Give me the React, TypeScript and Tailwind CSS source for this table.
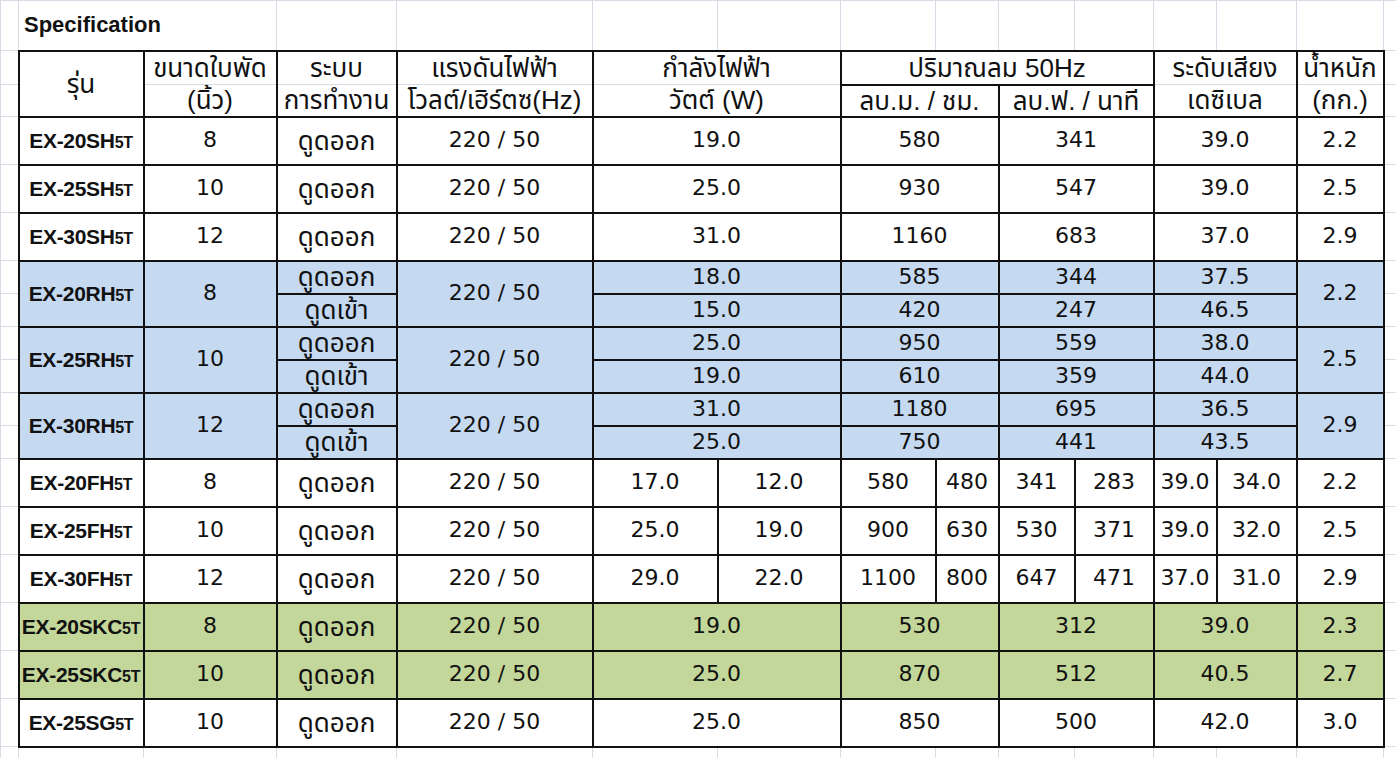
import type { ReactNode } from 'react';

const THAI = "font-['Liberation_Sans','Noto_Sans_Thai','Tahoma',sans-serif]";
const NUM = "font-['DejaVu_Sans','Tahoma',sans-serif]";

// excel-like sheet columns A..O
const colWidths = [
  'w-[18px]', 'w-[125px]', 'w-[133px]', 'w-[120px]', 'w-[196px]', 'w-[125px]', 'w-[123px]',
  'w-[95px]', 'w-[63px]', 'w-[76px]', 'w-[79px]', 'w-[63px]', 'w-[80px]', 'w-[87px]', 'w-[13px]',
];

type CellProps = {
  children?: ReactNode;
  className?: string;
  colSpan?: number;
  rowSpan?: number;
};

// faint gridline cell (no fill)
function G({ colSpan, className = '' }: CellProps) {
  return <td colSpan={colSpan} className={`border border-[#d9dce6] p-0 ${className}`} />;
}

// cell with black borders
function B({ children, className = '', colSpan, rowSpan }: CellProps) {
  return (
    <td
      colSpan={colSpan}
      rowSpan={rowSpan}
      className={`border-2 border-[#111] p-0 text-center align-middle whitespace-nowrap ${className}`}
    >
      {children}
    </td>
  );
}

function Model({ name }: { name: string }) {
  const base = name.slice(0, -2);
  return (
    <span className="font-['Liberation_Sans',Arial,sans-serif] font-bold text-[21px] tracking-[-0.3px]">
      {base}
      <span className="text-[16px]">5T</span>
    </span>
  );
}

function Num({ children }: { children: ReactNode }) {
  return <span className={`${NUM} text-[22px]`}>{children}</span>;
}

function Thai({ children }: { children: ReactNode }) {
  return <span className={`${THAI} text-[26px] leading-[28px]`}>{children}</span>;
}

type Simple = {
  model: string; size: string; volt: string; watt: string;
  m3: string; cfm: string; db: string; kg: string; bg: string;
};

function SimpleRow({ r }: { r: Simple }) {
  return (
    <tr className="h-[48px]">
      <G />
      <B className={r.bg}><Model name={r.model} /></B>
      <B className={r.bg}><Num>{r.size}</Num></B>
      <B className={r.bg}><Thai>ดูดออก</Thai></B>
      <B className={r.bg}><Num>{r.volt}</Num></B>
      <B colSpan={2} className={r.bg}><Num>{r.watt}</Num></B>
      <B colSpan={2} className={r.bg}><Num>{r.m3}</Num></B>
      <B colSpan={2} className={r.bg}><Num>{r.cfm}</Num></B>
      <B colSpan={2} className={r.bg}><Num>{r.db}</Num></B>
      <B className={r.bg}><Num>{r.kg}</Num></B>
      <G />
    </tr>
  );
}

type Rev = {
  model: string; size: string; kg: string;
  watt: [string, string]; m3: [string, string]; cfm: [string, string]; db: [string, string];
};

function RevRows({ r }: { r: Rev }) {
  const bg = 'bg-[#c5d9f1]';
  return (
    <>
      <tr className="h-[33px]">
        <G />
        <B rowSpan={2} className={bg}><Model name={r.model} /></B>
        <B rowSpan={2} className={bg}><Num>{r.size}</Num></B>
        <B className={`${bg} align-bottom`}><Thai>ดูดออก</Thai></B>
        <B rowSpan={2} className={bg}><Num>220 / 50</Num></B>
        <B colSpan={2} className={`${bg} align-bottom`}><Num>{r.watt[0]}</Num></B>
        <B colSpan={2} className={`${bg} align-bottom`}><Num>{r.m3[0]}</Num></B>
        <B colSpan={2} className={`${bg} align-bottom`}><Num>{r.cfm[0]}</Num></B>
        <B colSpan={2} className={`${bg} align-bottom`}><Num>{r.db[0]}</Num></B>
        <B rowSpan={2} className={bg}><Num>{r.kg}</Num></B>
        <G />
      </tr>
      <tr className="h-[33px]">
        <G />
        <B className={`${bg} align-bottom`}><Thai>ดูดเข้า</Thai></B>
        <B colSpan={2} className={`${bg} align-bottom`}><Num>{r.watt[1]}</Num></B>
        <B colSpan={2} className={`${bg} align-bottom`}><Num>{r.m3[1]}</Num></B>
        <B colSpan={2} className={`${bg} align-bottom`}><Num>{r.cfm[1]}</Num></B>
        <B colSpan={2} className={`${bg} align-bottom`}><Num>{r.db[1]}</Num></B>
        <G />
      </tr>
    </>
  );
}

type Fh = { model: string; size: string; vals: string[]; kg: string };

function FhRow({ r }: { r: Fh }) {
  return (
    <tr className="h-[48px]">
      <G />
      <B><Model name={r.model} /></B>
      <B><Num>{r.size}</Num></B>
      <B><Thai>ดูดออก</Thai></B>
      <B><Num>220 / 50</Num></B>
      {r.vals.map((v, i) => (
        <B key={i}><Num>{v}</Num></B>
      ))}
      <B><Num>{r.kg}</Num></B>
      <G />
    </tr>
  );
}

const shRows: Simple[] = [
  { model: 'EX-20SH5T', size: '8', volt: '220 / 50', watt: '19.0', m3: '580', cfm: '341', db: '39.0', kg: '2.2', bg: '' },
  { model: 'EX-25SH5T', size: '10', volt: '220 / 50', watt: '25.0', m3: '930', cfm: '547', db: '39.0', kg: '2.5', bg: '' },
  { model: 'EX-30SH5T', size: '12', volt: '220 / 50', watt: '31.0', m3: '1160', cfm: '683', db: '37.0', kg: '2.9', bg: '' },
];

const rhRows: Rev[] = [
  { model: 'EX-20RH5T', size: '8', kg: '2.2', watt: ['18.0', '15.0'], m3: ['585', '420'], cfm: ['344', '247'], db: ['37.5', '46.5'] },
  { model: 'EX-25RH5T', size: '10', kg: '2.5', watt: ['25.0', '19.0'], m3: ['950', '610'], cfm: ['559', '359'], db: ['38.0', '44.0'] },
  { model: 'EX-30RH5T', size: '12', kg: '2.9', watt: ['31.0', '25.0'], m3: ['1180', '750'], cfm: ['695', '441'], db: ['36.5', '43.5'] },
];

const fhRows: Fh[] = [
  { model: 'EX-20FH5T', size: '8', vals: ['17.0', '12.0', '580', '480', '341', '283', '39.0', '34.0'], kg: '2.2' },
  { model: 'EX-25FH5T', size: '10', vals: ['25.0', '19.0', '900', '630', '530', '371', '39.0', '32.0'], kg: '2.5' },
  { model: 'EX-30FH5T', size: '12', vals: ['29.0', '22.0', '1100', '800', '647', '471', '37.0', '31.0'], kg: '2.9' },
];

const tailRows: Simple[] = [
  { model: 'EX-20SKC5T', size: '8', volt: '220 / 50', watt: '19.0', m3: '530', cfm: '312', db: '39.0', kg: '2.3', bg: 'bg-[#c4d79b]' },
  { model: 'EX-25SKC5T', size: '10', volt: '220 / 50', watt: '25.0', m3: '870', cfm: '512', db: '40.5', kg: '2.7', bg: 'bg-[#c4d79b]' },
  { model: 'EX-25SG5T', size: '10', volt: '220 / 50', watt: '25.0', m3: '850', cfm: '500', db: '42.0', kg: '3.0', bg: '' },
];

const headTop = 'border-b border-b-[#d9dce6]';
const headBottom = 'border-t border-t-[#d9dce6]';

export default function App() {
  return (
    <div className="w-[1396px] h-[758px] overflow-hidden bg-white text-[#111] leading-[1.1]">
      <table className="table-fixed border-collapse w-[1396px]">
        <colgroup>
          {colWidths.map((w, i) => (
            <col key={i} className={w} />
          ))}
        </colgroup>
        <tbody>
          <tr className="h-[50px]">
            <G />
            <td colSpan={2} className="border border-[#d9dce6] p-0 pl-[5px] align-middle whitespace-nowrap">
              <span className="font-['Liberation_Sans',Arial,sans-serif] font-bold text-[22px]">Specification</span>
            </td>
            {Array.from({ length: 11 }).map((_, i) => (
              <G key={i} />
            ))}
            <G />
          </tr>

          <tr className="h-[34px]">
            <G />
            <B rowSpan={2}><Thai>รุ่น</Thai></B>
            <B className={`${headTop} align-bottom`}><Thai>ขนาดใบพัด</Thai></B>
            <B className={`${headTop} align-bottom`}><Thai>ระบบ</Thai></B>
            <B className={`${headTop} align-bottom`}><Thai>แรงดันไฟฟ้า</Thai></B>
            <B colSpan={2} className={`${headTop} align-bottom`}><Thai>กำลังไฟฟ้า</Thai></B>
            <B colSpan={4} className="align-bottom"><Thai>ปริมาณลม 50Hz</Thai></B>
            <B colSpan={2} className={`${headTop} align-bottom`}><Thai>ระดับเสียง</Thai></B>
            <B className={`${headTop} align-bottom`}><Thai>น้ำหนัก</Thai></B>
            <G />
          </tr>
          <tr className="h-[32px]">
            <G />
            <B className={`${headBottom} align-bottom`}><Thai>(นิ้ว)</Thai></B>
            <B className={`${headBottom} align-bottom`}><Thai>การทำงาน</Thai></B>
            <B className={`${headBottom} align-bottom`}><Thai>โวลต์/เฮิร์ตซ(Hz)</Thai></B>
            <B colSpan={2} className={`${headBottom} align-bottom`}><Thai>วัตต์ (W)</Thai></B>
            <B colSpan={2} className="align-bottom"><Thai>ลบ.ม. / ชม.</Thai></B>
            <B colSpan={2} className="align-bottom"><Thai>ลบ.ฟ. / นาที</Thai></B>
            <B colSpan={2} className={`${headBottom} align-bottom`}><Thai>เดซิเบล</Thai></B>
            <B className={`${headBottom} align-bottom`}><Thai>(กก.)</Thai></B>
            <G />
          </tr>

          {shRows.map((r) => (
            <SimpleRow key={r.model} r={r} />
          ))}
          {rhRows.map((r) => (
            <RevRows key={r.model} r={r} />
          ))}
          {fhRows.map((r) => (
            <FhRow key={r.model} r={r} />
          ))}
          {tailRows.map((r) => (
            <SimpleRow key={r.model} r={r} />
          ))}

          <tr className="h-[14px]">
            {Array.from({ length: 15 }).map((_, i) => (
              <G key={i} />
            ))}
          </tr>
        </tbody>
      </table>
    </div>
  );
}
